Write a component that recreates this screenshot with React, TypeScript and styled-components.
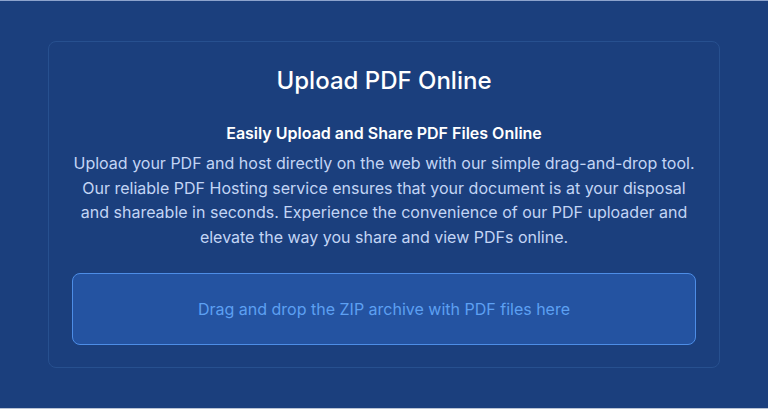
import styled, { createGlobalStyle } from 'styled-components';

const GlobalStyle = createGlobalStyle`
  html, body {
    margin: 0;
    padding: 0;
    background: #1b3f7d;
  }
  body {
    font-family: Inter, "Noto Sans", sans-serif;
    -webkit-font-smoothing: antialiased;
  }
`;

const Page = styled.div`
  box-sizing: border-box;
  width: 768px;
  height: 409px;
  padding: 40px 48px 0;
  background: #1b3f7d;
  border-top: 1px solid #8da3cc;
  border-bottom: 1px solid #b9c3d4;
`;

const Card = styled.section`
  box-sizing: border-box;
  height: 327px;
  padding: 24px 23px 0;
  border: 1px solid #27508f;
  border-radius: 8px;
  display: flex;
  flex-direction: column;
  align-items: center;
`;

const Title = styled.h1`
  margin: 0;
  font-size: 24px;
  line-height: 30px;
  font-weight: 500;
  color: #ffffff;
`;

const Subtitle = styled.h2`
  margin: 26px 0 0;
  font-size: 16px;
  line-height: 22px;
  font-weight: 600;
  color: #ffffff;
`;

const Description = styled.p`
  margin: 7px 0 0;
  font-size: 16px;
  line-height: 24.6px;
  font-weight: 400;
  color: #c3d5f5;
  text-align: center;
`;

const DropZone = styled.div`
  box-sizing: border-box;
  width: 100%;
  height: 72px;
  margin-top: 24px;
  border: 1px solid #4d8de6;
  border-radius: 8px;
  background: #2453a1;
  display: flex;
  align-items: center;
  justify-content: center;
  font-size: 16px;
  color: #5da0f2;
`;

export default function App() {
  return (
    <>
      <GlobalStyle />
      <Page>
        <Card>
          <Title>Upload PDF Online</Title>
          <Subtitle>Easily Upload and Share PDF Files Online</Subtitle>
          <Description>
            Upload your PDF and host directly on the web with our simple drag-and-drop tool.
            Our reliable PDF Hosting service ensures that your document is at your disposal
            and shareable in seconds. Experience the convenience of our PDF uploader and
            elevate the way you share and view PDFs online.
          </Description>
          <DropZone>Drag and drop the ZIP archive with PDF files here</DropZone>
        </Card>
      </Page>
    </>
  );
}
